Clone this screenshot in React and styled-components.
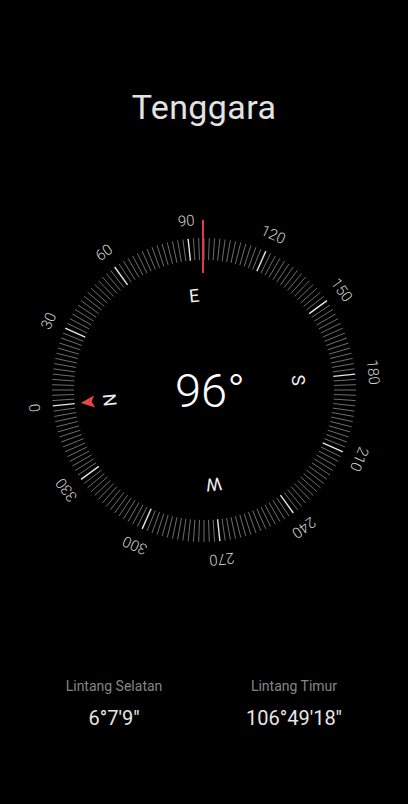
import React from 'react';
import styled, { createGlobalStyle } from 'styled-components';

const GlobalStyle = createGlobalStyle`
  html, body {
    margin: 0;
    padding: 0;
    background: #000;
  }
  body {
    font-family: Roboto, "Noto Sans", "Liberation Sans", sans-serif;
  }
`;

const Screen = styled.div`
  width: 408px;
  height: 804px;
  background: #000;
  display: flex;
  flex-direction: column;
  align-items: center;
  overflow: hidden;
`;

const Title = styled.h1`
  margin: 87px 0 0;
  font-size: 34px;
  line-height: 40px;
  font-weight: 400;
  color: #e2e2e2;
  letter-spacing: 0.4px;
`;

const Dial = styled.svg`
  display: block;
  margin-top: 73px;
  width: 380px;
  height: 380px;
`;

const Coords = styled.div`
  width: 100%;
  box-sizing: border-box;
  padding: 0 24px;
  margin-top: 96px;
  display: grid;
  grid-template-columns: 1fr 1fr;
`;

const Coord = styled.div`
  display: flex;
  flex-direction: column;
  align-items: center;
  gap: 9px;
`;

const Label = styled.span`
  font-size: 14px;
  line-height: 20px;
  color: #858585;
`;

const Value = styled.span`
  font-size: 20px;
  line-height: 26px;
  font-weight: 400;
  color: #e6e6e6;
`;

const HEADING = 96;
const C = 190;

const polar = (deg, r) => {
  const a = ((deg - HEADING) * Math.PI) / 180;
  return [C + Math.sin(a) * r, C - Math.cos(a) * r];
};

const ticks = Array.from({ length: 180 }, (_, i) => i * 2);
const numbers = [0, 30, 60, 90, 120, 150, 180, 210, 240, 270, 300, 330];
const cardinals = [
  { d: 0, t: 'N' },
  { d: 90, t: 'E' },
  { d: 180, t: 'S' },
  { d: 270, t: 'W' },
];

const Compass = () => (
  <Dial viewBox="0 0 380 380">
    {ticks.map((d) => {
      const major = d % 30 === 0;
      const [x1, y1] = polar(d, 130);
      const [x2, y2] = polar(d, 152);
      return (
        <line
          key={d}
          x1={x1}
          y1={y1}
          x2={x2}
          y2={y2}
          stroke={major ? '#e6e6e6' : '#6e6e6e'}
          strokeWidth={major ? 1.4 : 1}
        />
      );
    })}
    {numbers.map((d) => {
      const [x, y] = polar(d, 170);
      return (
        <text
          key={d}
          x={x}
          y={y}
          fill="#d0d0d0"
          fontSize="15"
          fontWeight="300"
          fontFamily="Roboto, sans-serif"
          textAnchor="middle"
          dominantBaseline="central"
          transform={`rotate(${d - HEADING} ${x} ${y})`}
        >
          {d}
        </text>
      );
    })}
    {cardinals.map(({ d, t }) => {
      const [x, y] = polar(d, 95);
      return (
        <text
          key={t}
          x={x}
          y={y}
          fill="#f0f0f0"
          fontSize="18"
          fontFamily="Roboto, sans-serif"
          textAnchor="middle"
          dominantBaseline="central"
          transform={`rotate(${d - HEADING} ${x} ${y})`}
        >
          {t}
        </text>
      );
    })}
    <g transform={`rotate(${-HEADING} ${C} ${C})`}>
      <path
        d={`M ${C} ${C - 124} L ${C + 6} ${C - 110} L ${C} ${C - 113} L ${C - 6} ${C - 110} Z`}
        fill="#e8474a"
      />
    </g>
    <line x1={C - 1} y1={C - 170} x2={C - 1} y2={C - 117} stroke="#e0394c" strokeWidth="2" />
    <text
      x={C + 6}
      y={C}
      fill="#ffffff"
      fontSize="47"
      fontFamily="Roboto, sans-serif"
      fontWeight="300"
      textAnchor="middle"
      dominantBaseline="central"
    >
      96°
    </text>
  </Dial>
);

const App = () => (
  <Screen>
    <GlobalStyle />
    <Title>Tenggara</Title>
    <Compass />
    <Coords>
      <Coord>
        <Label>Lintang Selatan</Label>
        <Value>6°7'9"</Value>
      </Coord>
      <Coord>
        <Label>Lintang Timur</Label>
        <Value>106°49'18"</Value>
      </Coord>
    </Coords>
  </Screen>
);

export default App;
